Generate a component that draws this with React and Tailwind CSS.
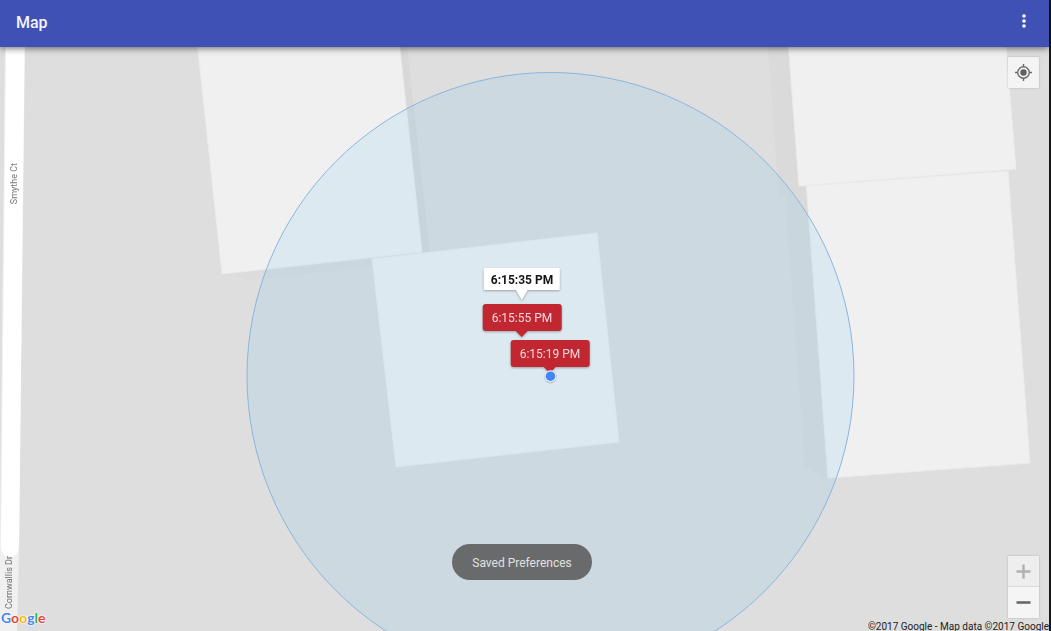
const markers = [
  { time: "6:15:35 PM", x: 522, y: 253, tone: "light" },
  { time: "6:15:55 PM", x: 522, y: 290, tone: "red" },
  { time: "6:15:19 PM", x: 550, y: 326, tone: "red" },
];

const logoLetters = [
  ["G", "text-[#4285f4]"],
  ["o", "text-[#ea4335]"],
  ["o", "text-[#fbbc05]"],
  ["g", "text-[#4285f4]"],
  ["l", "text-[#34a853]"],
  ["e", "text-[#ea4335]"],
];

function AppBar() {
  return (
    <header className="relative z-10 flex h-[47px] shrink-0 items-center justify-between bg-[#3f51b5] pl-4 pr-[11px] shadow-[0_1px_7px_rgba(0,0,0,0.6)]">
      <h1 className="pb-[2px] text-base font-medium text-[#f3f4fb]">Map</h1>
      <button type="button" aria-label="More options" className="flex h-8 w-7 items-center justify-center pb-[5px]">
        <svg width="4" height="14" viewBox="0 0 4 14" fill="#fff">
          <circle cx="2" cy="2" r="1.8" />
          <circle cx="2" cy="7" r="1.8" />
          <circle cx="2" cy="12" r="1.8" />
        </svg>
      </button>
    </header>
  );
}

function MapCanvas() {
  return (
    <svg
      className="absolute inset-0 h-full w-full"
      viewBox="0 0 1049 584"
      preserveAspectRatio="xMinYMin slice"
      aria-hidden="true"
    >
      <rect width="1049" height="584" fill="#dedede" />
      <path d="M5 0 L25 0 L19 508 L17 584 L0 584 L0 500Z" fill="#f0f0f0" />
      <path d="M6 0 H24.500 L19 500 Q18 510 10 510 Q2 510 1 500Z" fill="#fff" />
      <path d="M400 0H407L430 205L422 206Z" fill="#d8d8d8" />
      <path d="M222 227L371 212L371 220L251 233Z" fill="#dcdcdc" />
      <path d="M768 0H788L799 139L805 140L779 151Z" fill="#dadada" />
      <path d="M785 149L806 139L828 431L805 420Z" fill="#dadada" />
      <g fill="#f0f0f0" stroke="#ebebeb" strokeWidth="1">
        <path d="M197.500 -1H399.500L422 205L222 227Z" />
        <path d="M372 212L597 186L619 395L396 420Z" />
        <path d="M806.500 139L1008 124L1030 416L828 431Z" />
        <path d="M788.500 -1H1006L1016 122L799 139Z" />
      </g>
      <circle cx="550.500" cy="329" r="303.500" fill="#42b4f5" fillOpacity="0.11" stroke="#8ab6e0" strokeWidth="1" />
    </svg>
  );
}

function Marker({ time, x, y, tone }) {
  const light = tone === "light";
  return (
    <button
      type="button"
      className="absolute flex -translate-x-1/2 -translate-y-full flex-col items-center drop-shadow-[0_1px_1px_rgba(0,0,0,0.3)]"
      style={{ left: x, top: y }}
    >
      <span
        className={
          light
            ? "flex h-[22px] items-center justify-center rounded-[1px] bg-white px-[7px] pt-px text-xs font-bold whitespace-nowrap text-[#151515]"
            : "flex h-[27px] items-center justify-center rounded-[3px] bg-[#c12730] px-[9px] text-xs whitespace-nowrap text-[#f0d9dd]"
        }
      >
        {time}
      </span>
      {light ? (
        <svg width="12" height="10" viewBox="0 0 12 10" fill="#fff">
          <path d="M0 0H12L6 10Z" />
        </svg>
      ) : (
        <svg width="12" height="6" viewBox="0 0 12 6" fill="#c12730">
          <path d="M0 0H12L6 6Z" />
        </svg>
      )}
    </button>
  );
}

function CurrentLocation() {
  return (
    <svg className="absolute top-[322px] left-[543px]" width="15" height="15" viewBox="0 0 15 15" aria-hidden="true">
      <circle cx="7.500" cy="7.800" r="6.500" fill="#8fa3b8" fillOpacity="0.5" />
      <circle cx="7.500" cy="7.200" r="5.900" fill="#eef3f8" />
      <circle cx="7.500" cy="7.200" r="4.800" fill="#4285f4" />
    </svg>
  );
}

function MapControls() {
  return (
    <div className="absolute top-[10px] right-[10px] bottom-[13px] flex flex-col justify-between">
      <button
        type="button"
        aria-label="My location"
        className="flex h-[31px] w-[31px] items-center justify-center rounded-[1px] bg-[#f4f4f4] shadow-[0_0_2px_rgba(0,0,0,0.25)]"
      >
        <svg width="17" height="17" viewBox="0 0 17 17" fill="none" stroke="#6c6c6c" strokeWidth="1.400">
          <circle cx="8.500" cy="8.500" r="5.800" />
          <circle cx="8.500" cy="8.500" r="3.200" fill="#616161" stroke="none" />
          <path d="M8.500 0V3M8.500 14V17M0 8.500H3M14 8.500H17" />
        </svg>
      </button>
      <div className="flex flex-col divide-y divide-[#dadada] rounded-[1px] shadow-[0_0_2px_rgba(0,0,0,0.25)]">
        <button type="button" aria-label="Zoom in" className="flex h-[31px] w-[31px] items-center justify-center bg-[#eeeeee]">
          <svg width="15" height="15" viewBox="0 0 15 15" stroke="#b0b0b0" strokeWidth="2.400">
            <path d="M0.500 7.500H14.500M7.500 0.500V14.500" />
          </svg>
        </button>
        <button type="button" aria-label="Zoom out" className="flex h-[31px] w-[31px] items-center justify-center bg-[#f5f5f5]">
          <svg width="15" height="15" viewBox="0 0 15 15" stroke="#686868" strokeWidth="2.600">
            <path d="M0.500 7.500H14.500" />
          </svg>
        </button>
      </div>
    </div>
  );
}

export default function App() {
  return (
    <div className="flex min-h-screen bg-[#181818] pr-[2px] font-[Roboto,sans-serif]">
      <div className="flex min-w-0 flex-1 flex-col">
        <AppBar />
        <main className="relative flex-1 overflow-hidden bg-[#dedede]">
          <MapCanvas />
          <span className="absolute top-[116px] left-[8px] rotate-180 text-[9px] leading-3 whitespace-nowrap text-[#777] [writing-mode:vertical-rl]">
            Smythe Ct
          </span>
          <span className="absolute bottom-[22px] left-[3px] rotate-180 text-[9px] leading-3 whitespace-nowrap text-[#76726a] [writing-mode:vertical-rl]">
            Cornwallis Dr
          </span>
          {markers.map((marker) => (
            <Marker key={marker.time} {...marker} />
          ))}
          <CurrentLocation />
          <MapControls />
          <div className="pointer-events-none absolute inset-x-0 bottom-[51px] flex justify-center pr-[5px]">
            <div
              role="status"
              className="flex h-9 items-center rounded-full bg-[#696a6b] px-5 pt-px text-xs whitespace-nowrap text-[#e2e2e2]"
            >
              Saved Preferences
            </div>
          </div>
          <a
            href="#google"
            className="absolute bottom-[3px] left-[1px] font-[Lato,sans-serif] text-sm leading-5 font-bold [text-shadow:0_0_1px_#fff,0_0_2px_#fff,0_0_2px_#fff]"
          >
            {logoLetters.map(([letter, color], index) => (
              <span key={index} className={color}>
                {letter}
              </span>
            ))}
          </a>
          <p className="absolute right-0 -bottom-1 text-[10px] leading-4 whitespace-nowrap text-[#222]">
            ©2017 Google - Map data ©2017 Google
          </p>
        </main>
      </div>
    </div>
  );
}
